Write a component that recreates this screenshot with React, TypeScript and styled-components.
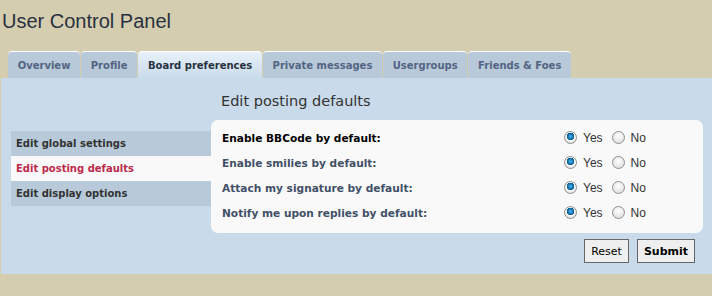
import styled, { createGlobalStyle } from 'styled-components';

const GlobalStyle = createGlobalStyle`
  body {
    margin: 0;
    background: #d5cdb0;
    font-family: 'DejaVu Sans', Verdana, sans-serif;
  }
`;

const Page = styled.div`
  width: 712px;
  height: 296px;
  overflow: hidden;
`;

const Title = styled.h1`
  margin: 0;
  padding: 10px 0 0 2px;
  height: 51px;
  box-sizing: border-box;
  font-family: 'Liberation Sans', Arial, sans-serif;
  font-weight: normal;
  font-size: 20px;
  color: #28313f;
`;

const Tabs = styled.ul`
  display: flex;
  gap: 1px;
  margin: 0;
  padding: 0 0 0 8px;
  list-style: none;
  height: 27px;
  align-items: flex-end;
`;

const Tab = styled.li<{ $active?: boolean }>`
  height: 27px;
  box-sizing: border-box;
  padding: 0 9.7px;
  display: flex;
  align-items: center;
  border-radius: 4px 4px 0 0;
  border-top: 1px solid #fff;
  font-size: 10px;
  font-weight: bold;
  color: ${(p) => (p.$active ? '#28313f' : '#536482')};
  background: ${(p) =>
    p.$active ? 'linear-gradient(#e8f1fa, #c9dbea)' : '#b8cad9'};
`;

const Panel = styled.div`
  margin-left: 1px;
  background: #c9dbea;
  display: flex;
  padding: 0 9px 11px 10px;
  height: 196px;
  box-sizing: border-box;
`;

const Sidebar = styled.ul`
  width: 200px;
  margin: 53px 0 0;
  padding: 0;
  list-style: none;
`;

const MenuItem = styled.li<{ $active?: boolean }>`
  height: 25px;
  display: flex;
  align-items: center;
  padding-left: 5px;
  font-size: 10px;
  font-weight: bold;
  color: ${(p) => (p.$active ? '#bc2a4d' : '#333')};
  background: ${(p) => (p.$active ? '#f9f9f9' : '#b8cad9')};
`;

const Main = styled.div`
  flex: 1;
  display: flex;
  flex-direction: column;
`;

const Heading = styled.h2`
  margin: 0;
  padding: 15px 0 0 10px;
  height: 42px;
  box-sizing: border-box;
  font-family: 'DejaVu Sans', sans-serif;
  font-weight: normal;
  font-size: 14.5px;
  color: #333;
`;

const Box = styled.div`
  background: #f9f9f9;
  border-radius: 7px;
  padding: 5px 0 8px;
`;

const Row = styled.div`
  display: flex;
  align-items: center;
  height: 25px;
  padding-left: 11px;
`;

const Label = styled.span<{ $strong?: boolean }>`
  width: 342px;
  font-size: 10.6px;
  font-weight: bold;
  color: ${(p) => (p.$strong ? '#000' : '#425067')};
`;

const Choice = styled.label`
  display: flex;
  align-items: center;
  gap: 6px;
  margin-right: 9px;
  font-family: 'Liberation Sans', Arial, sans-serif;
  font-size: 12px;
  color: #333;
`;

const Radio = styled.input.attrs({ type: 'radio' })`
  appearance: none;
  margin: 0;
  width: 13px;
  height: 13px;
  border-radius: 50%;
  border: 1px solid #8f8f8f;
  background: radial-gradient(circle at 50% 35%, #fff, #d8d8d8);
  box-sizing: border-box;
  &:checked {
    background: radial-gradient(circle at 50% 40%, #4fb4ef 0, #0a6aa6 3px, #0a4d7a 3.5px, #fff 4px, #e4e4e4 6px);
  }
`;

const Actions = styled.div`
  display: flex;
  justify-content: flex-end;
  gap: 8px;
  padding: 6px 8px 0 0;
`;

const Button = styled.button<{ $primary?: boolean }>`
  height: 24px;
  padding: 0 6px;
  border: 1px solid #666;
  background: #efefef;
  font-family: 'DejaVu Sans', Verdana, sans-serif;
  font-size: 11px;
  font-weight: ${(p) => (p.$primary ? 'bold' : 'normal')};
  color: #000;
`;

const tabs = ['Overview', 'Profile', 'Board preferences', 'Private messages', 'Usergroups', 'Friends & Foes'];
const menu = ['Edit global settings', 'Edit posting defaults', 'Edit display options'];
const options = [
  'Enable BBCode by default:',
  'Enable smilies by default:',
  'Attach my signature by default:',
  'Notify me upon replies by default:',
];

export default function App() {
  return (
    <Page>
      <GlobalStyle />
      <Title>User Control Panel</Title>
      <Tabs>
        {tabs.map((t) => (
          <Tab key={t} $active={t === 'Board preferences'}>{t}</Tab>
        ))}
      </Tabs>
      <Panel>
        <Sidebar>
          {menu.map((m) => (
            <MenuItem key={m} $active={m === 'Edit posting defaults'}>{m}</MenuItem>
          ))}
        </Sidebar>
        <Main>
          <Heading>Edit posting defaults</Heading>
          <Box>
            {options.map((o, i) => (
              <Row key={o}>
                <Label $strong={i === 0}>{o}</Label>
                <Choice>
                  <Radio name={`opt${i}`} defaultChecked /> Yes
                </Choice>
                <Choice>
                  <Radio name={`opt${i}`} /> No
                </Choice>
              </Row>
            ))}
          </Box>
          <Actions>
            <Button>Reset</Button>
            <Button $primary>Submit</Button>
          </Actions>
        </Main>
      </Panel>
    </Page>
  );
}
